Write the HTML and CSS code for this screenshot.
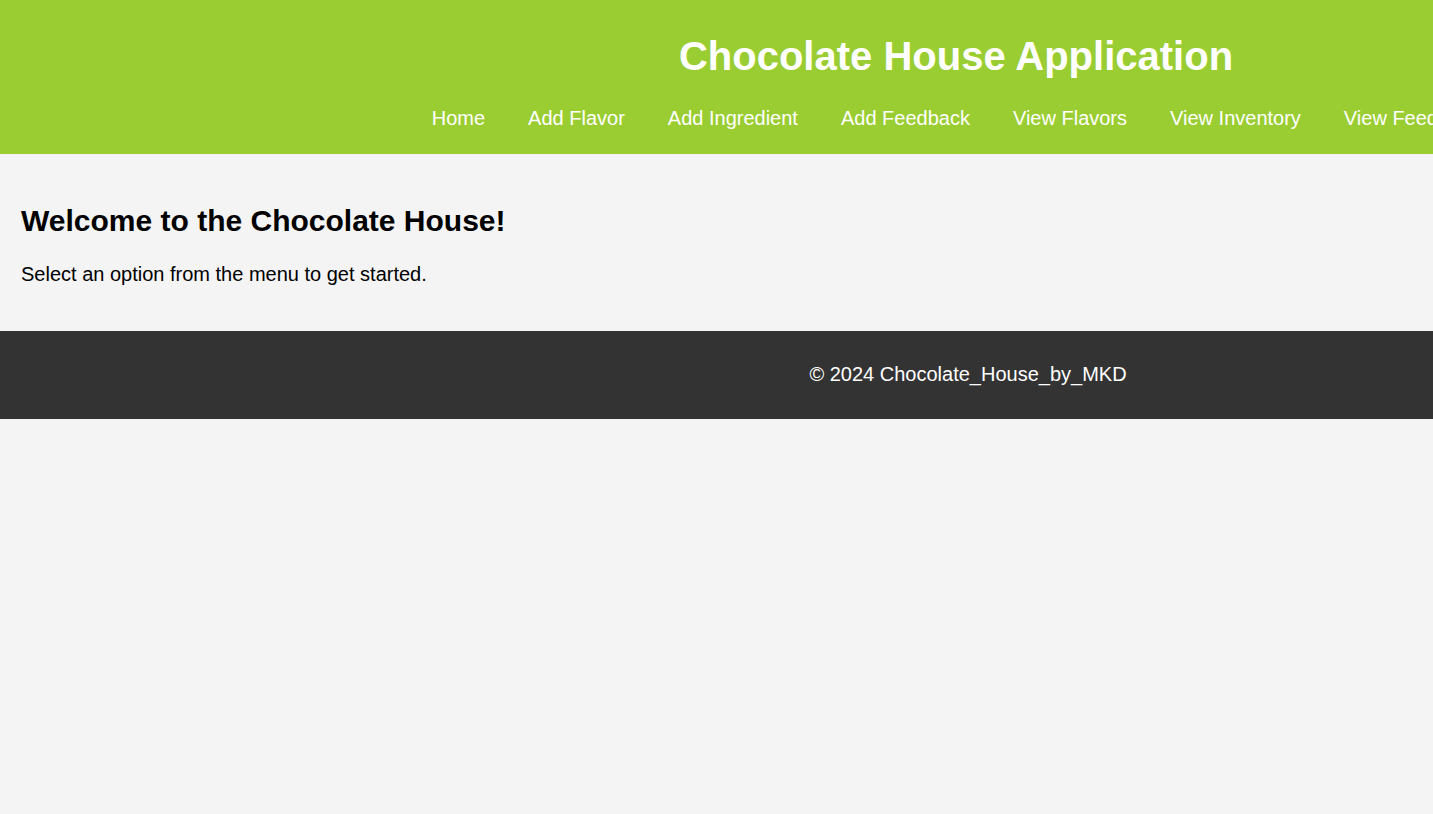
FILE: index.html
```html
<!DOCTYPE html>
<html lang="en">
<head>
<meta charset="utf-8">
<title>Chocolate House Application</title>
<link rel="stylesheet" href="styles.css">
</head>
<body>
<div class="site">
  <header class="site-header">
    <h1 class="site-title">Chocolate House Application</h1>
    <nav class="site-nav">
      <ul class="nav-list">
        <li><a href="#">Home</a></li>
        <li><a href="#">Add Flavor</a></li>
        <li><a href="#">Add Ingredient</a></li>
        <li><a href="#">Add Feedback</a></li>
        <li><a href="#">View Flavors</a></li>
        <li><a href="#">View Inventory</a></li>
        <li><a href="#">View Feedback</a></li>
      </ul>
    </nav>
  </header>
  <main class="content">
    <h2 class="welcome">Welcome to the Chocolate House!</h2>
    <p class="lead">Select an option from the menu to get started.</p>
  </main>
  <footer class="site-footer">
    <p class="copyright">&copy; 2024 Chocolate_House_by_MKD</p>
  </footer>
</div>
</body>
</html>
```

FILE: styles.css
```css
html, body {
  overflow-x: hidden;
}

body {
  margin: 0;
  background: #f4f4f4;
  font-family: "Liberation Sans", Arial, sans-serif;
  font-size: 20px;
  color: #000;
}

.site {
  width: 1912px;
}

.site-header {
  background: #9acd32;
  color: #fff;
  padding: 34px 0 24px;
}

.site-title {
  margin: 0 0 28px;
  font-size: 40px;
  font-weight: bold;
  text-align: center;
  line-height: normal;
}

.nav-list {
  list-style: none;
  margin: 0;
  padding: 0;
  display: flex;
  justify-content: center;
  gap: 43px;
}

.nav-list a {
  color: #fff;
  text-decoration: none;
  font-size: 20px;
}

.content {
  padding: 25px 20px 25px 21px;
}

.welcome {
  font-size: 30px;
  font-weight: bold;
  margin: 25px 0;
}

.lead {
  margin: 20px 0;
}

.site-footer {
  width: 100%;
  background: #333;
  color: #fff;
  padding: 32px 12px 33px;
  text-align: center;
}

.copyright {
  margin: 0;
}
```
